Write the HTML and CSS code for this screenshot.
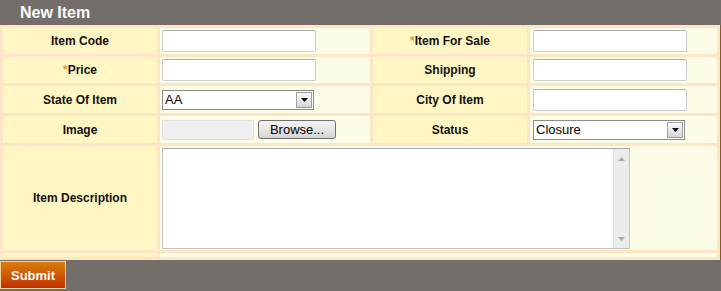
FILE: index.html
```html
<!DOCTYPE html>
<html lang="en">
<head>
  <meta charset="UTF-8" />
  <title>New Item</title>
  <link rel="stylesheet" href="styles.css">
</head>
<body>
  <div class="panel">
    <div class="panel-head">New Item</div>

    <table class="form-table">
      <colgroup>
        <col class="col-label" />
        <col class="col-field" />
        <col class="col-label" />
        <col class="col-field-wide" />
      </colgroup>
      <tr>
        <td class="label">Item Code</td>
        <td class="field"><input type="text" class="text-input" /></td>
        <td class="label"><span class="req">*</span>Item For Sale</td>
        <td class="field field-right"><input type="text" class="text-input" /></td>
      </tr>
      <tr>
        <td class="label"><span class="req">*</span>Price</td>
        <td class="field"><input type="text" class="text-input" /></td>
        <td class="label">Shipping</td>
        <td class="field field-right"><input type="text" class="text-input" /></td>
      </tr>
      <tr class="tall-row">
        <td class="label">State Of Item</td>
        <td class="field">
          <div class="select-box">
            <span class="select-value">AA</span>
            <span class="select-arrow">
              <svg width="7" height="4" viewBox="0 0 7 4"><path d="M0 0h7L3.5 4z" fill="#000" /></svg>
            </span>
          </div>
        </td>
        <td class="label">City Of Item</td>
        <td class="field field-right"><input type="text" class="text-input" /></td>
      </tr>
      <tr class="tall-row">
        <td class="label">Image</td>
        <td class="field">
          <div class="file-box">
            <span class="file-name"></span>
            <button class="browse-btn" type="button">Browse...</button>
          </div>
        </td>
        <td class="label">Status</td>
        <td class="field field-right">
          <div class="select-box">
            <span class="select-value">Closure</span>
            <span class="select-arrow">
              <svg width="7" height="4" viewBox="0 0 7 4"><path d="M0 0h7L3.5 4z" fill="#000" /></svg>
            </span>
          </div>
        </td>
      </tr>
      <tr class="desc-row">
        <td class="label">Item Description</td>
        <td class="field" colspan="3">
          <div class="textarea-box">
            <textarea></textarea>
            <div class="scrollbar">
              <svg width="7" height="4" viewBox="0 0 7 4"><path d="M0 4h7L3.5 0z" fill="#a8a8a8" /></svg>
              <svg width="7" height="4" viewBox="0 0 7 4"><path d="M0 0h7L3.5 4z" fill="#a8a8a8" /></svg>
            </div>
          </div>
        </td>
      </tr>
      <tr class="spacer-row">
        <td class="label"></td>
        <td class="field" colspan="3"></td>
      </tr>
    </table>

    <div class="panel-foot">
      <button class="submit-btn" type="button">Submit</button>
    </div>
  </div>
</body>
</html>
```

FILE: styles.css
```css
* {
  box-sizing: border-box;
}

body {
  margin: 0;
  font-family: "Liberation Sans", Arial, sans-serif;
  background: #ffffff;
}

.panel {
  width: 721px;
}

.panel-head {
  height: 25px;
  background-color: #736e6a;
  color: #ffffff;
  font-size: 16px;
  font-weight: bold;
  line-height: 25px;
  padding-left: 20px;
}

.form-table {
  width: 721px;
  table-layout: fixed;
  border-collapse: separate;
  border-spacing: 3px;
  background-color: #fde6c6;
  border-right: 1px solid #8a5a24;
}

.col-label {
  width: 154px;
}

.col-field {
  width: 210px;
}

.col-field-wide {
  width: 187px;
}

.form-table td {
  height: 26px;
  padding: 0 2px;
}

.form-table .tall-row td {
  height: 27px;
}

.label {
  background-color: #fff6c4;
  text-align: center;
  font-size: 12px;
  font-weight: bold;
  color: #111111;
}

.req {
  color: #e39a2e;
}

.field {
  background-color: #fdfde7;
}

.field-right {
  padding-left: 3px !important;
}

.text-input {
  display: block;
  width: 154px;
  height: 22px;
  border: 1px solid #cfcfcf;
  border-top-color: #b0b0b0;
  border-radius: 2px;
  background: #ffffff;
  margin: 0;
}

.select-box {
  position: relative;
  width: 152px;
  height: 20px;
  border: 1px solid #8c8c8c;
  background: #ffffff;
  font-size: 13px;
  line-height: 18px;
  padding-left: 2px;
  color: #000000;
}

.select-arrow {
  position: absolute;
  right: 1px;
  top: 1px;
  width: 16px;
  height: 16px;
  border: 1px solid #a0a0a0;
  background: linear-gradient(#fbfbfb, #d6d6d6);
  display: flex;
  align-items: center;
  justify-content: center;
}

.file-box {
  display: flex;
  align-items: center;
  gap: 4px;
}

.file-name {
  width: 92px;
  height: 20px;
  background: #f0f0f0;
  border: 1px solid #e2e2e2;
}

.browse-btn {
  width: 78px;
  height: 19px;
  padding: 0;
  border: 1px solid #707070;
  border-radius: 3px;
  background: linear-gradient(#f4f4f4 0%, #e6e6e6 50%, #d4d4d4 100%);
  font-family: "Liberation Sans", Arial, sans-serif;
  font-size: 13px;
  line-height: 17px;
  color: #000000;
}

.form-table .desc-row td {
  height: 104px;
}

.textarea-box {
  display: flex;
  width: 468px;
  height: 101px;
  border: 1px solid #c4c4c4;
  border-top-color: #a9a9a9;
  background: #ffffff;
}

.textarea-box textarea {
  flex: 1;
  border: none;
  resize: none;
  outline: none;
  margin: 0;
}

.scrollbar {
  width: 16px;
  background: #ececec;
  border-left: 1px solid #e2e2e2;
  display: flex;
  flex-direction: column;
  justify-content: space-between;
  align-items: center;
  padding: 8px 0 7px;
}

.form-table .spacer-row td {
  height: 4px;
}

.panel-foot {
  height: 31px;
  background-color: #736e6a;
  padding-top: 1px;
}

.submit-btn {
  display: block;
  width: 66px;
  height: 28px;
  border: 1px solid #f3d59c;
  background: linear-gradient(#d97d0b, #c63e02 85%, #c03000);
  color: #ffffff;
  font-family: "Liberation Sans", Arial, sans-serif;
  font-size: 13px;
  font-weight: bold;
  padding: 0;
}
```
